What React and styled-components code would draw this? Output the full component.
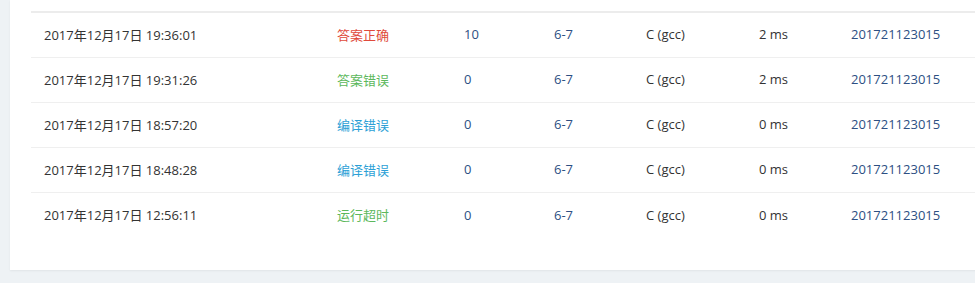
import React from "react";
import styled, { createGlobalStyle } from "styled-components";

const Global = createGlobalStyle`
  html, body { margin: 0; padding: 0; }
  body {
    background: #eef2f5;
    font-family: "Open Sans", "Noto Sans CJK SC", sans-serif;
    font-size: 13px;
    color: #333;
    overflow: hidden;
    width: 975px;
    height: 283px;
  }
`;

const Card = styled.div`
  margin-left: 10px;
  width: 1000px;
  height: 270px;
  background: #fff;
  box-shadow: 0 1px 2px rgba(0, 0, 0, 0.06);
  padding: 11px 0 0 21px;
  box-sizing: border-box;
`;

const Table = styled.div`
  border-top: 2px solid #ececec;
`;

const Row = styled.div`
  display: grid;
  grid-template-columns: 293px 127px 90px 92px 113px 92px 1fr;
  height: 45px;
  box-sizing: border-box;
  align-items: center;
  padding-bottom: 2px;
  border-bottom: ${(p) => (p.$last ? "none" : "1px solid #efefef")};
`;

const Cell = styled.div`
  padding-left: 13px;
  white-space: nowrap;
  color: ${(p) => p.$color || "#333"};
`;

const STATUS = {
  ok: { text: "答案正确", color: "#e04a3b" },
  wa: { text: "答案错误", color: "#5cb85c" },
  ce: { text: "编译错误", color: "#2c9fd6" },
  tle: { text: "运行超时", color: "#5cb85c" },
};

const LINK = "#2d4f83";

const rows = [
  { time: "2017年12月17日 19:36:01", s: "ok", score: "10", ms: "2 ms" },
  { time: "2017年12月17日 19:31:26", s: "wa", score: "0", ms: "2 ms" },
  { time: "2017年12月17日 18:57:20", s: "ce", score: "0", ms: "0 ms" },
  { time: "2017年12月17日 18:48:28", s: "ce", score: "0", ms: "0 ms" },
  { time: "2017年12月17日 12:56:11", s: "tle", score: "0", ms: "0 ms" },
];

export default function App() {
  return (
    <>
      <Global />
      <Card>
        <Table>
          {rows.map((r, i) => (
            <Row key={i} $last={i === rows.length - 1}>
              <Cell>{r.time}</Cell>
              <Cell $color={STATUS[r.s].color}>{STATUS[r.s].text}</Cell>
              <Cell $color={LINK}>{r.score}</Cell>
              <Cell $color={LINK}>6-7</Cell>
              <Cell>C (gcc)</Cell>
              <Cell>{r.ms}</Cell>
              <Cell $color={LINK}>201721123015</Cell>
            </Row>
          ))}
        </Table>
      </Card>
    </>
  );
}
